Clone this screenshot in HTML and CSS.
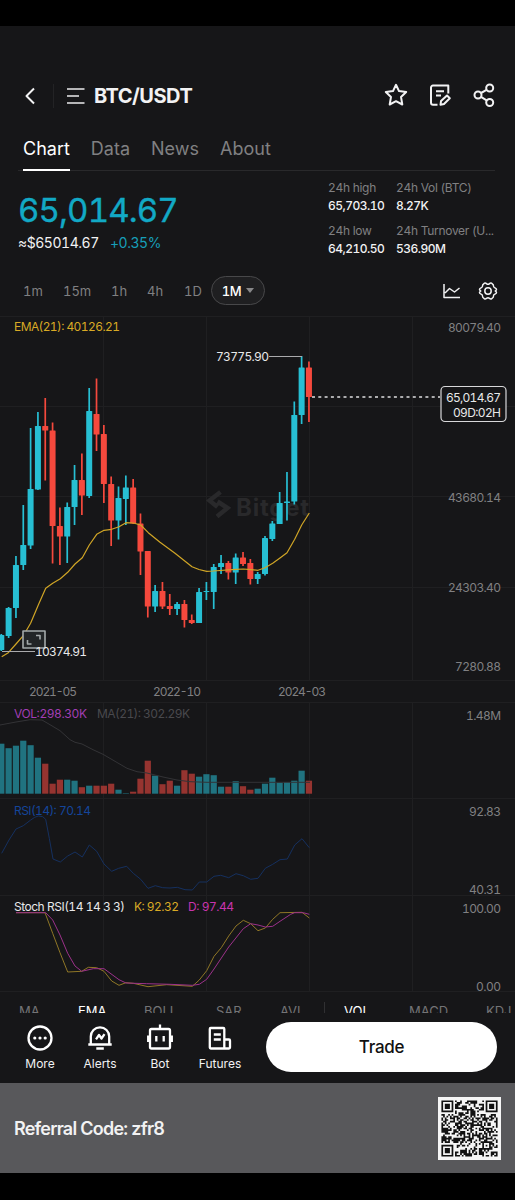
FILE: index.html
```html
<!DOCTYPE html>
<html lang="en">
  <head>
    <meta charset="UTF-8" />
    <meta name="viewport" content="width=device-width, initial-scale=1.0" />
    <title>BTC/USDT</title>
    <link rel="stylesheet" href="styles.css">
  </head>
  <body>
    <header class="header">
      <svg class="back" width="12" height="18" viewBox="0 0 12 18"><path d="M10 1.500 2.500 9l7.500 7.500" /></svg>
      <span class="divider"></span>
      <svg class="menu" width="18" height="18" viewBox="0 0 18 18"><path d="M0 2h17.500M0 9h12M0 16h17.500" /></svg>
      <h1 class="pair">BTC/USDT</h1>
      <div class="header-icons">
        <svg width="24" height="24" viewBox="0 0 24 24"><path d="m12 1.800 3 6.300 7.200.9-5.200 4.900 1.300 7.600-6.300-3.300-6.300 3.300L7 13.900 1.800 9 9 8.100z" /></svg>
        <svg width="24" height="24" viewBox="0 0 24 24"><path d="M9.500 21.800H5a2 2 0 0 1-2-2V4.500a2 2 0 0 1 2-2h15.300v8M8 8.300h8M8 12.500h5M12.500 21.800l.5-3.700 6-5.600 2.800 2.800-5.800 5.700z" /></svg>
        <svg width="24" height="24" viewBox="0 0 24 24"><circle cx="17.700" cy="5" r="3.500" /><circle cx="6" cy="12" r="3.500" /><circle cx="17.700" cy="19.500" r="3.500" /><path d="m9 10 6-3.300M9 13.900l6 3.700" /></svg>
      </div>
    </header>

    <nav class="tabs">
      <a class="tab active">Chart</a>
      <a class="tab">Data</a>
      <a class="tab">News</a>
      <a class="tab">About</a>
    </nav>

    <section class="ticker">
      <div class="price-box">
        <div class="price">65,014.67</div>
        <div class="price-sub"><span>≈$65014.67</span><span class="change">+0.35%</span></div>
      </div>
      <div class="stats">
        <div class="stat"><span>24h high</span><b>65,703.10</b></div>
        <div class="stat"><span>24h Vol (BTC)</span><b>8.27K</b></div>
        <div class="stat"><span>24h low</span><b>64,210.50</b></div>
        <div class="stat"><span>24h Turnover (U...</span><b>536.90M</b></div>
      </div>
    </section>

    <div class="intervals">
      <span class="t-1m">1m</span>
      <span class="t-15m">15m</span>
      <span class="t-1h">1h</span>
      <span class="t-4h">4h</span>
      <span class="t-1d">1D</span>
      <div class="interval-active">1M <i class="caret"></i></div>
      <div class="chart-tools">
        <svg width="18" height="16" viewBox="0 0 18 16"><path d="M1 1v13.500h16M2 10l4.500-4.500 5 3.500L16.500 5" /></svg>
        <svg width="20" height="20" viewBox="0 0 20 20"><path d="M6.500 2.200C8 1.200 8.500 3.300 10 3.300s2-2.100 3.500-1.100 2.300 1.200 2 3c-.2 1.800 3 1.500 3 3.300 0 1.200-1.300 1-1.300 1.500s1.300.3 1.300 1.500c0 1.800-3.200 1.500-3 3.300.3 1.800-.5 2-2 3s-2-1.100-3.500-1.100-2 2.100-3.500 1.100-2.300-1.200-2-3c.2-1.800-3-1.500-3-3.300 0-1.200 1.300-1 1.300-1.500S1.500 9.700 1.500 8.500c0-1.800 3.200-1.500 3-3.300-.3-1.800.5-2 2-3z" /><circle cx="10" cy="10" r="3.200" /></svg>
      </div>
    </div>

    <svg class="chart" width="515" height="676" viewBox="0 316 515 676">
      <g id="grid" class="grid"></g>
      <g class="watermark">
        <path d="m220.500 492-11 8.500 8 6.500M217.500 501.500l10 6.500-10.500 8.500" />
        <text x="236" y="516" textLength="73">Bitget</text>
      </g>
      <g id="candles"></g>
      <g id="volume"></g>
      <g id="lines"></g>

      <path class="marker" d="M269 356.500h33M2 651.500h33" />
      <path class="last-price" d="M312 397h128" />
      <rect class="price-tag" x="441" y="386.500" width="65" height="35" rx="4" />
      <g class="expand">
        <rect x="23" y="631" width="22" height="17" />
        <path d="M36 635.500h4v4M27.500 640v4h4" />
      </g>

      <g class="white">
        <text x="216" y="361" textLength="53">73775.90</text>
        <text x="35" y="656" textLength="52">10374.91</text>
        <text x="446" y="402" textLength="55">65,014.67</text>
        <text x="453" y="416.500" textLength="48">09D:02H</text>
        <text x="14" y="911" textLength="111">Stoch RSI(14 14 3 3)</text>
      </g>
      <text class="ema" x="14" y="331" textLength="106">EMA(21): 40126.21</text>
      <text class="vol" x="14" y="718" textLength="73">VOL:298.30K</text>
      <text class="vol-ma" x="97" y="718" textLength="93">MA(21): 302.29K</text>
      <text class="rsi" x="14" y="815" textLength="77">RSI(14): 70.14</text>
      <text class="ema" x="134" y="911" textLength="45">K: 92.32</text>
      <text class="stoch-d" x="188" y="911" textLength="46">D: 97.44</text>

      <g class="axis">
        <text x="448" y="331.500" textLength="53">80079.40</text>
        <text x="448" y="501.500" textLength="53">43680.14</text>
        <text x="448" y="592" textLength="53">24303.40</text>
        <text x="455" y="671" textLength="46">7280.88</text>
        <text x="466" y="720" textLength="35">1.48M</text>
        <text x="469" y="816" textLength="32">92.83</text>
        <text x="469" y="893.500" textLength="32">40.31</text>
        <text x="462" y="913" textLength="39">100.00</text>
        <text x="476" y="990.500" textLength="25">0.00</text>
        <text x="29" y="696" textLength="48">2021-05</text>
        <text x="153" y="696" textLength="48">2022-10</text>
        <text x="278" y="696" textLength="48">2024-03</text>
      </g>
    </svg>

    <div class="indicators">
      <span>MA</span>
      <span class="on">EMA</span>
      <span>BOLL</span>
      <span>SAR</span>
      <span>AVL</span>
      <i></i>
      <span class="on">VOL</span>
      <span>MACD</span>
      <span>KDJ</span>
    </div>

    <footer class="bottom-bar">
      <div class="action">
        <svg width="28" height="28" viewBox="0 0 28 28"><circle cx="14" cy="14" r="11.500" /><path class="dots" d="M8.800 14h0M14 14h0M19.200 14h0" /></svg>
        <span>More</span>
      </div>
      <div class="action">
        <svg width="28" height="28" viewBox="0 0 28 28"><path d="M2.300 20.500h23.400M4.800 20v-7.500a9.200 9.200 0 0 1 18.400 0V20M10.300 24.500h7.500M10 15.300l3-4.300 2.500 3.500 3-4.300" /></svg>
        <span>Alerts</span>
      </div>
      <div class="action">
        <svg width="28" height="28" viewBox="0 0 28 28"><rect x="4" y="5" width="20" height="19.500" rx="1.500" /><path d="M14 .5V5M2.200 11.500v6.500M25.800 11.500v6.500M10.300 12v5.500M17.700 12v5.500" /></svg>
        <span>Bot</span>
      </div>
      <div class="action">
        <svg width="28" height="28" viewBox="0 0 28 28"><path d="M19 24.500H4.800a1 1 0 0 1-1-1V5a1 1 0 0 1 1-1h12.500a1 1 0 0 1 1 1v18.500M18.500 15.500H23a1 1 0 0 1 1 1v7a1 1 0 0 1-1 1h-4.500M7.800 10.500h7M7.800 15.500h7" /></svg>
        <span>Futures</span>
      </div>
      <button class="trade">Trade</button>
    </footer>

    <div class="referral">
      <span>Referral Code: zfr8</span>
      <svg class="qr" width="63" height="63" viewBox="-2 -2 37 37"><path id="qr" /></svg>
    </div>

    <script src="script.js"></script>
  </body>
</html>
```
FILE: styles.css
```css
body {
  margin: 0;
  width: 515px;
  height: 1147px;
  padding-top: 26px;
  background-color: #000;
  color: #f2f2f3;
  font-family: Inter, "Liberation Sans", sans-serif;
  font-variant-numeric: tabular-nums;
  overflow: hidden;
}
svg {
  display: block;
  flex: none;
  fill: none;
  stroke: #f2f2f3;
  stroke-width: 2;
  stroke-linejoin: round;
}
.header {
  display: flex;
  align-items: center;
  height: 98px;
  padding: 41px 19px 0 24px;
  box-sizing: border-box;
  background-color: #161618;
}
.divider {
  width: 1px;
  height: 24px;
  margin: 0 13px 0 17px;
  background-color: #232325;
}
.menu {
  stroke: #b5b5b7;
  stroke-width: 1.8;
}
.pair {
  margin: 0 0 0 9px;
  font-size: 20px;
  font-weight: 700;
  letter-spacing: -0.5px;
}
.header-icons {
  display: flex;
  gap: 20px;
  margin: -2px 0 0 auto;
}
.tabs {
  display: flex;
  gap: 21px;
  height: 47px;
  padding: 0 23px;
  background: linear-gradient(#29292b, #29292b) 18px 46px / 477px 1px no-repeat #161618;
}
.tab {
  box-sizing: border-box;
  padding-top: 13px;
  color: #808082;
  font-size: 18px;
  line-height: 23px;
}
.tab.active {
  color: #fff;
  border-bottom: 2px solid #fff;
}
.ticker {
  display: flex;
  height: 91px;
  background-color: #161618;
}
.price-box {
  width: 310px;
  padding: 18px 0 0 18px;
  box-sizing: border-box;
}
.price {
  color: #12a9c5;
  font-size: 33px;
  line-height: 42px;
  letter-spacing: -0.85px;
  -webkit-text-stroke: 0.4px #12a9c5;
}
.price-sub {
  font-size: 14px;
  line-height: 23px;
  letter-spacing: -0.45px;
}
.change {
  margin-left: 11px;
  color: #169fb8;
}
.stats {
  display: grid;
  grid-template-columns: 68px 110px;
  grid-auto-rows: 43px;
  padding: 8px 0 0 18px;
}
.stat {
  display: flex;
  flex-direction: column;
  font-size: 12px;
  line-height: 18px;
  white-space: nowrap;
}
.stat span {
  color: #808082;
  letter-spacing: -0.3px;
}
.stat b {
  font-weight: 500;
  letter-spacing: -0.5px;
}
.intervals {
  display: flex;
  align-items: center;
  height: 54px;
  padding: 3px 17px 0 23px;
  box-sizing: border-box;
  background-color: #161618;
  color: #808082;
  font-size: 13px;
}
.t-1m {
  width: 40px;
}
.t-15m {
  width: 48px;
}
.t-1h {
  width: 36px;
}
.t-4h {
  width: 37px;
}
.t-1d {
  width: 27px;
}
.interval-active {
  display: flex;
  align-items: center;
  justify-content: center;
  gap: 5px;
  width: 54px;
  height: 29px;
  box-sizing: border-box;
  border: 1px solid #48484a;
  border-radius: 15px;
  background-color: #1f1f21;
  color: #fff;
  font-weight: 500;
  letter-spacing: -0.4px;
}
.caret {
  border: 4.5px solid transparent;
  border-top: 5px solid #88888a;
  border-bottom: 0;
}
.chart-tools {
  display: flex;
  align-items: center;
  gap: 17px;
  margin-left: auto;
}
.chart-tools svg {
  stroke-width: 1.5;
}
.chart {
  background-color: #161618;
  stroke: none;
  font-size: 12px;
}
.grid {
  stroke: #1f1f21;
  stroke-width: 1;
}
.watermark {
  fill: #29292b;
  font-size: 24px;
  font-weight: 700;
}
.watermark path {
  fill: none;
  stroke: #29292b;
  stroke-width: 4.5;
  stroke-linejoin: miter;
}
.up {
  fill: #27bfd3;
}
.down {
  fill: #f5493d;
}
.vol-up {
  fill: #207380;
}
.vol-down {
  fill: #963430;
}
.line {
  fill: none;
  stroke-width: 1;
}
.line-ema {
  stroke: #d0a526;
  stroke-width: 1.2;
}
.line-vol {
  stroke: #333336;
}
.line-rsi {
  stroke: #15305f;
}
.line-k {
  stroke: #8f7626;
}
.line-d {
  stroke: #9c318a;
}
.marker {
  stroke: #aaaaac;
  stroke-width: 1;
}
.last-price {
  stroke: #dededf;
  stroke-width: 1.5;
  stroke-dasharray: 3 3.3;
}
.price-tag {
  fill: #161618;
  stroke: #d8d8da;
  stroke-width: 1.2;
}
.expand {
  stroke: #a3a9aa;
  stroke-width: 1.6;
}
.expand rect {
  fill: #222527;
}
.white {
  fill: #e8e8e9;
}
.axis {
  fill: #808082;
}
.ema {
  fill: #d9aa25;
}
.vol {
  fill: #a23eb4;
}
.vol-ma {
  fill: #49494d;
}
.rsi {
  fill: #14459a;
}
.stoch-d {
  fill: #c834ad;
}
.indicators {
  display: grid;
  grid-template-columns: 59px 66px 72px 64px 44px 20px 65px 77px 40px;
  height: 21px;
  padding: 10px 0 0 19px;
  box-sizing: border-box;
  overflow: hidden;
  background-color: #161618;
  color: #747476;
  font-size: 13px;
  line-height: 18px;
}
.indicators i {
  width: 1px;
  height: 11px;
  background-color: #303032;
}
.indicators .on {
  color: #fff;
}
.bottom-bar {
  display: flex;
  height: 70px;
  padding: 9px 18px 0 10px;
  box-sizing: border-box;
  background-color: #161618;
}
.action {
  display: flex;
  flex-direction: column;
  align-items: center;
  gap: 4px;
  width: 60px;
  padding-top: 2px;
  font-size: 12px;
  line-height: 15px;
}
.action svg {
  stroke: #fff;
  stroke-width: 2.3;
}
.action .dots {
  stroke-width: 3.2;
  stroke-linecap: round;
}
.trade {
  width: 231px;
  height: 50px;
  margin-left: auto;
  border: 0;
  border-radius: 25px;
  background-color: #fff;
  color: #111;
  font: 500 17px Inter, sans-serif;
  letter-spacing: -0.3px;
}
.referral {
  display: flex;
  align-items: center;
  justify-content: space-between;
  height: 90px;
  padding: 0 14px;
  background-color: #58585b;
  font-size: 18px;
  font-weight: 600;
  letter-spacing: -0.8px;
}
.qr {
  background-color: #f5f5f5;
  stroke: none;
  fill: #111;
}
```
FILE: script.js
```javascript
const NS = "http://www.w3.org/2000/svg";
const STEP = 7.325;

function add(parent, tag, attrs) {
  const el = document.createElementNS(NS, tag);
  for (const key in attrs) el.setAttribute(key, attrs[key]);
  document.getElementById(parent).appendChild(el);
}

// grid
[316.5, 406.5, 496.5, 587.5, 680.5, 702.5, 798.5, 895.5, 991.5].forEach((y) => {
  add("grid", "path", { d: `M0 ${y}H515` });
});
[103.5, 206.5, 309.5, 412.5].forEach((x) => {
  add("grid", "path", { d: `M${x} 316V680M${x} 702V991` });
});

// high, body top, body bottom, low, up
const candles = [
  [634, 635, 650, 651, 1], [607, 608, 636, 638, 1], [556, 565, 608, 618, 1],
  [505, 545, 565, 570, 1], [428, 489, 545.5, 549, 1], [412, 426, 489.5, 490, 1],
  [398, 426, 430.5, 480.5, 0], [422.5, 430.5, 526, 563.5, 0], [507.5, 526, 536.5, 565, 0],
  [502.5, 507, 536.5, 563, 1], [465, 480, 507, 525, 1], [453.5, 480, 495.5, 515, 0],
  [388, 411, 496, 498, 1], [378.5, 414, 434.5, 451, 0], [425, 434, 484, 503, 0],
  [476.5, 484, 520.5, 546, 0], [486.5, 498, 520.5, 539.5, 1], [475.5, 487.5, 499, 525, 1],
  [479, 487.5, 523.5, 524, 0], [513.5, 523.5, 551.5, 575, 0], [551, 551, 606.5, 617.5, 0],
  [585, 591, 606.5, 612, 1], [582, 591, 606.5, 609, 0], [594, 606, 609, 615, 0],
  [602, 604, 609, 615, 1], [600, 604, 620, 627.5, 0], [614.5, 620, 623, 624, 0],
  [588, 592, 623, 623, 1], [582, 591, 592, 600, 1], [564, 567, 592, 609, 1],
  [555, 563, 567, 574, 1], [561, 563, 572.5, 579.5, 0], [553.5, 557.5, 572.5, 584, 1],
  [552, 557.5, 564, 566, 0], [559, 563, 579, 584.5, 0], [572, 574, 579, 584, 1],
  [536, 538, 574, 575.5, 1], [521, 523.5, 539, 541, 1], [492, 503, 524, 524, 1],
  [472, 501.5, 503, 520.5, 1], [401.5, 415, 501.5, 504.5, 1], [356, 367.5, 415, 424, 1],
  [361.5, 367.5, 397, 422, 0],
];
const volumes = [
  50, 45.5, 48, 53, 48.5, 36, 30, 10, 14, 14, 13, 6.5, 8, 8, 8, 10, 4, 0.5, 2, 15, 33, 18,
  9.5, 13, 8, 23.5, 20, 17, 19.5, 18.5, 7, 7, 12.5, 7.5, 4, 5, 10, 16, 11, 11.5, 13, 23, 13,
];

candles.forEach(([high, top, bottom, low, up], i) => {
  const x = 1.3 + i * STEP;
  const cls = up ? "up" : "down";
  add("candles", "rect", { class: cls, x: x - 0.85, y: high, width: 1.7, height: low - high });
  add("candles", "rect", { class: cls, x: x - 3, y: top, width: 6, height: bottom - top, rx: 0.6 });
  add("volume", "rect", {
    class: "vol-" + cls,
    x: x - 3.1,
    y: 793.7 - volumes[i],
    width: 6.2,
    height: volumes[i],
  });
});

const lines = {
  ema: "1.7,656.7 8.3,652.7 16,644 23.3,635.7 30.6,623.3 38.3,605 45.7,588.3 52.7,583.3 60.3,578.7 67.7,572.3 75,564 82.3,557.7 89.3,545 96.7,534.3 104,530.3 111.7,529.3 119,526.7 126,522.7 133.3,523 140.7,525 148.3,532.7 160,542.3 175,553.3 192,566.7 199,569.5 206.7,571.3 213,571 236,569.3 243.3,569 250.7,569.7 258,570.3 265,567.7 272.7,563.3 280,558 287,552.7 294.7,539.3 301.7,525 309.3,513",
  vol: "0,725 16,722 30,719.7 42,720 50,724.7 60,730.7 70,739.7 75,742.3 82,744 93,749.7 103,754.3 115,761.3 127,768.3 137,771.7 147,773 163,777 177,780 190,781.7 207,782.3 310,782.3",
  rsi: "1.7,853.3 9,840 16,829 23.3,825.7 30.7,820 34.7,817.3 38.3,816 42.7,816.7 45.7,819.3 49.3,838.3 53,859 60.3,862 67.7,856 75,852 82.3,857 89.3,845 96.7,851.3 104,864 111.7,871.3 118.7,868.3 126.7,866.3 133.3,873.3 140.7,879.3 148,888.3 155.3,885.7 162.7,887.7 170,888 177.3,887.3 185,889.7 192.3,890 199.3,882 206.7,882 214,876.3 220.7,875.3 228.7,877.7 236,873.7 243.3,875.7 250.7,879.3 258,878.3 265.3,868.3 272.7,864.3 280,859.7 287.3,859 294.7,845 302,838.7 309.3,847.7",
  k: "16,912.7 45,912.7 52.7,933.3 60,952.7 67.7,972 81.7,971.3 88.3,967.3 96.7,967.7 104,971.3 111.7,981 119,985.3 126,982.7 133.3,983.3 148,986.7 166.7,984.7 192.3,986.3 199.3,980 206.7,970.7 214,956.3 221.3,947.7 228.7,936 236,926 243.3,920.3 250.7,923.7 258,930.7 265.3,928 272.7,919.3 280,912.7 302,912.3 309.3,918",
  d: "16,912.7 45.7,912.7 52.7,920 60,935 67.7,953.3 75,966 81.7,971.3 93.3,968.7 104,968.7 119,979.7 126,983 146.7,983.7 170,984.3 192.3,985.3 199.3,984.3 206.7,979.3 214,969 228.7,947 243.3,928.7 250.7,923.7 258,925 265.3,927 272.7,926.3 280,921.3 290.7,914.3 294.7,912.7 303.3,912.7 309.3,914.3",
};
for (const name in lines) {
  add("lines", "polyline", { class: "line line-" + name, points: lines[name] });
}

// qr code, 33x33 modules
const SIZE = 33;
function square(x, y, cx, cy) {
  return Math.max(Math.abs(x - cx), Math.abs(y - cy));
}
let seed = 77;
let d = "";
for (let y = 0; y < SIZE; y++) {
  for (let x = 0; x < SIZE; x++) {
    seed = (seed * 1103515245 + 12345) % 2147483648;
    let dark = seed / 2147483648 < 0.52;
    [[3, 3], [29, 3], [3, 29]].forEach(([cx, cy]) => {
      const r = square(x, y, cx, cy);
      if (r <= 4) dark = r === 3 || r < 2;
    });
    const r = square(x, y, 26, 26);
    if (r <= 2) dark = r !== 1;
    if (dark) d += `M${x} ${y}h1v1h-1z`;
  }
}
document.getElementById("qr").setAttribute("d", d);
```
